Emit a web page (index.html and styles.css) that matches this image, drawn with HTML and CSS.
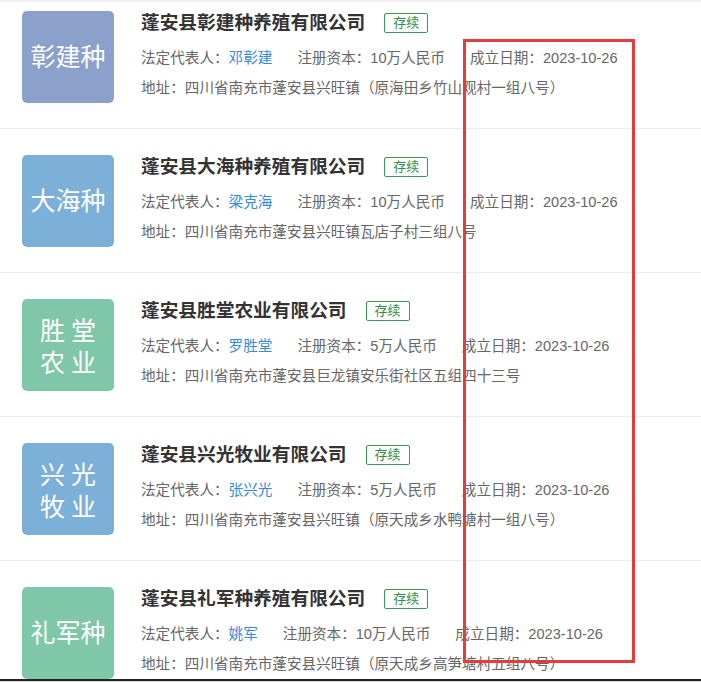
FILE: index.html
```html
<!DOCTYPE html>
<html lang="zh-CN">

<head>
    <meta charset="UTF-8">
    <meta name="viewport" content="width=device-width, initial-scale=1.0">
    <title>企业列表</title>
    <link rel="stylesheet" href="styles.css">
</head>
<body>
    <!-- Company List -->
    <div class="company-list">
        <div class="company">
            <div class="logo logo-purple">彰建种</div>
            <div class="info">
                <div class="title-line">
                    <span class="name">蓬安县彰建种养殖有限公司</span>
                    <span class="status">存续</span>
                </div>
                <div class="meta">
                    <span>法定代表人：<a class="person">邓彰建</a></span>
                    <span>注册资本：10万人民币</span>
                    <span>成立日期：2023-10-26</span>
                </div>
                <div class="address">地址：四川省南充市蓬安县兴旺镇（原海田乡竹山观村一组八号）</div>
            </div>
        </div>

        <div class="company">
            <div class="logo logo-blue">大海种</div>
            <div class="info">
                <div class="title-line">
                    <span class="name">蓬安县大海种养殖有限公司</span>
                    <span class="status">存续</span>
                </div>
                <div class="meta">
                    <span>法定代表人：<a class="person">梁克海</a></span>
                    <span>注册资本：10万人民币</span>
                    <span>成立日期：2023-10-26</span>
                </div>
                <div class="address">地址：四川省南充市蓬安县兴旺镇瓦店子村三组八号</div>
            </div>
        </div>

        <div class="company">
            <div class="logo logo-green logo-two">胜堂<br>农业</div>
            <div class="info">
                <div class="title-line">
                    <span class="name">蓬安县胜堂农业有限公司</span>
                    <span class="status">存续</span>
                </div>
                <div class="meta">
                    <span>法定代表人：<a class="person">罗胜堂</a></span>
                    <span>注册资本：5万人民币</span>
                    <span>成立日期：2023-10-26</span>
                </div>
                <div class="address">地址：四川省南充市蓬安县巨龙镇安乐街社区五组四十三号</div>
            </div>
        </div>

        <div class="company">
            <div class="logo logo-blue logo-two">兴光<br>牧业</div>
            <div class="info">
                <div class="title-line">
                    <span class="name">蓬安县兴光牧业有限公司</span>
                    <span class="status">存续</span>
                </div>
                <div class="meta">
                    <span>法定代表人：<a class="person">张兴光</a></span>
                    <span>注册资本：5万人民币</span>
                    <span>成立日期：2023-10-26</span>
                </div>
                <div class="address">地址：四川省南充市蓬安县兴旺镇（原天成乡水鸭塘村一组八号）</div>
            </div>
        </div>

        <div class="company">
            <div class="logo logo-green">礼军种</div>
            <div class="info">
                <div class="title-line">
                    <span class="name">蓬安县礼军种养殖有限公司</span>
                    <span class="status">存续</span>
                </div>
                <div class="meta">
                    <span>法定代表人：<a class="person">姚军</a></span>
                    <span>注册资本：10万人民币</span>
                    <span>成立日期：2023-10-26</span>
                </div>
                <div class="address">地址：四川省南充市蓬安县兴旺镇（原天成乡高笋塘村五组八号）</div>
            </div>
        </div>
    </div>

    <!-- Highlight marker -->
    <div class="highlight"></div>

    <!-- Bottom edge -->
    <div class="bottom-edge"></div>
</body>

</html>
```

FILE: styles.css
```css
* {
    margin: 0;
    padding: 0;
    box-sizing: border-box;
}

body {
    font-family: "Liberation Sans", "Noto Sans CJK SC", sans-serif;
    background-color: #ffffff;
    color: #666666;
    height: 682px;
    overflow: hidden;
    position: relative;
    border-top: 2px solid #f1f1f1;
    text-spacing-trim: space-all;
}

.company-list {
    margin-top: -17px;
}

.company {
    display: flex;
    gap: 27px;
    padding: 26px 0 25px 22px;
    border-bottom: 1px solid #ececec;
}

.logo {
    width: 92px;
    height: 92px;
    flex-shrink: 0;
    border-radius: 5px;
    color: #ffffff;
    font-size: 25px;
    line-height: 1;
    display: flex;
    align-items: center;
    justify-content: center;
    text-align: center;
}

.logo-two {
    line-height: 32px;
    letter-spacing: 6px;
    padding-left: 6px;
    padding-top: 3px;
}

.logo-purple {
    background-color: #8ba1cb;
}

.logo-blue {
    background-color: #7cb0d9;
}

.logo-green {
    background-color: #80c7aa;
}

.info {
    display: flex;
    flex-direction: column;
}

.title-line {
    display: flex;
    align-items: center;
    gap: 19px;
    height: 24px;
}

.name {
    font-size: 18.7px;
    font-weight: bold;
    color: #333333;
    line-height: 24px;
}

.status {
    font-size: 13px;
    color: #2f8f47;
    border: 1px solid #3b9b52;
    border-radius: 2px;
    width: 44px;
    height: 20px;
    line-height: 18px;
    text-align: center;
}

.meta {
    display: flex;
    gap: 25px;
    margin-top: 8px;
    font-size: 14.6px;
    line-height: 30px;
}

.person {
    color: #3589e0;
    cursor: pointer;
}

.address {
    font-size: 14.6px;
    line-height: 30px;
}

.highlight {
    position: absolute;
    left: 463px;
    top: 37px;
    width: 172px;
    height: 624px;
    border: 3px solid #e43d3d;
    pointer-events: none;
}

.bottom-edge {
    position: absolute;
    left: 0;
    right: 0;
    bottom: 0;
    height: 3px;
    background-color: #d8d8d8;
    border-top: 2px solid #222222;
}
```
